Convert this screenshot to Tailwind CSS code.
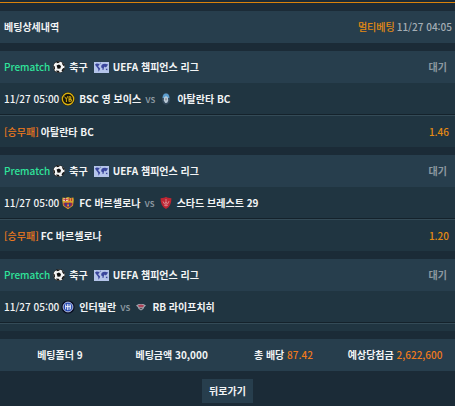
<!DOCTYPE html>
<html lang="ko">
<head>
  <meta charset="UTF-8" />
  <meta name="viewport" content="width=device-width, initial-scale=1.0"/>
  <title>베팅상세내역</title>
  <script src="https://cdn.jsdelivr.net/npm/@tailwindcss/browser@4"></script>
</head>
<body class="bg-[#1b2b37] min-h-screen font-['Noto_Sans_CJK_KR',sans-serif] text-[10px] leading-4 font-medium text-[#f2f4f5]">
  <!-- shared icons -->
  <svg class="hidden" aria-hidden="true">
    <symbol id="ball" viewBox="0 0 12 12">
      <circle cx="6" cy="6" r="6" fill="#111"/>
      <circle cx="6" cy="6" r="5.6" fill="#f4f4f4"/>
      <path fill="#111" d="M3.6 4.6 6 3.4 8 5 7.4 7.6 4.6 7.8ZM3.4.8 7 .2 6.2 1.8 3.8 2.2ZM8.8 1.2 11.6 4 10.8 5.2 9.4 3.4ZM.2 4.4 1.8 5.4 2 8.2.8 8.8ZM10 7.2 11.8 6.8 10 10.6 8.4 9.6ZM3 9.4 5.8 9.8 6.8 11.8 4 11.6Z"/>
    </symbol>
    <symbol id="world" viewBox="0 0 15 11">
      <path fill="#b4c4ea" d="M0 0H15V11H0Z"/>
      <path fill="#39459c" d="M1 2.4 2.6 1.6 4.6 1.8 5.8 2.8 4.6 3.6 4.2 4.6 5.6 6 6.2 6.8 5.4 8.2 4.6 9.8 4.2 7 3 5.2 1.6 3.6ZM5.4 1 7 .8 6.4 1.8ZM7.6 3 9 2 11 1.8 14.2 2.4 13.4 3.4 12.6 4.8 11.6 5.4 10.8 4.6 10 5.6 9.4 8 8.6 8 8.4 6 7.2 5.6 7.2 4.4ZM11.8 6.8 13.4 6.8 13.4 8.2 12 8Z"/>
    </symbol>
    <symbol id="youngboys" viewBox="0 0 14 14">
      <circle cx="7" cy="7" r="6.8" fill="#17150b"/>
      <circle cx="7" cy="7" r="5.7" fill="none" stroke="#d9b010" stroke-width="1.4"/>
      <path fill="none" stroke="#d9b010" stroke-width="1" d="M3.6 4.6 5.4 7.2 6.8 4.2M5.4 7.2V10M8 4.4V9.6M8 4.8H9.8V6.8H8.4M8 7.4H10.4V9.2H8"/>
    </symbol>
    <symbol id="atalanta" viewBox="0 0 14 14">
      <ellipse cx="7" cy="6.8" rx="4.2" ry="6" fill="#33495c"/>
      <path fill="#5c9fd0" d="M3.6 6C3.8 2.8 5 1.4 7 1.4S10.2 2.8 10.4 6Z"/>
      <path fill="#b9c9d6" d="M5 5.4 7 4 9 5.4 9.2 8.4 8.2 10.8 6.2 11 4.8 8.6Z"/>
      <path fill="#6d6970" d="M6.2 6.4H7.8L7 9Z"/>
    </symbol>
    <symbol id="barca" viewBox="0 0 14 14">
      <path fill="#d6a52b" d="M1.6 1.4 4.4 2 7 1 9.6 2 12.4 1.4 12.8 4 12 9.8 7 13.2 2 9.8 1.2 4Z"/>
      <path fill="#e6d6c6" d="M2.4 2.4H6.8V5H2.2Z"/>
      <path fill="#c32b42" d="M4 2.2H5V5H4ZM2.4 3.2H6.8V4H2.4ZM7.8 2.2H8.8V5H7.8ZM10 2.2H11V5H10Z"/>
      <path fill="#9c234e" d="M2.6 6.8H11.4V9.2L7 12 2.6 9.2Z"/>
      <path fill="#284494" d="M4.2 6.8H5.6V11L4.2 10ZM8 6.8H9.4V10.4L8 11.4Z"/>
      <path fill="#d6a52b" d="M6.2 8.6H8V10.2H6.2Z"/>
    </symbol>
    <symbol id="brest" viewBox="0 0 14 14">
      <path fill="#bd2532" d="M1.6 2.2C4 2.2 5.6 1.8 7 .8 8.4 1.8 10 2.2 12.4 2.2 12.6 7.4 10.8 11 7 13 3.2 11 1.4 7.4 1.6 2.2Z"/>
      <path fill="none" stroke="#e0949b" stroke-width=".8" d="M7 3V10.4M4 5.4 5 7.6 7 6.4 9 7.6 10 5M5 9.2H9"/>
    </symbol>
    <symbol id="inter" viewBox="0 0 14 14">
      <circle cx="7" cy="7" r="6.6" fill="#080d23"/>
      <circle cx="7" cy="7" r="4.9" fill="#1b3fae" stroke="#dfe6f7" stroke-width=".8"/>
      <path fill="none" stroke="#f2f5fc" stroke-width=".9" d="M4.6 4.4V9.4M6.4 3.8V10.2M8 3.8V10.2M9.6 4.4V9.4M4.6 6.6H9.6"/>
    </symbol>
    <symbol id="leipzig" viewBox="0 0 14 14">
      <path fill="#9ea4ad" d="M2 5.4 4.6 4H9.4L12 5.4 10.4 7 9.4 9 7 10.4 4.6 9 3.6 7Z"/>
      <path fill="#b04458" d="M4 5.2 7 4.4 10 5.2 9 7.2H5Z"/>
      <path fill="#48454f" d="M5.4 8H8.6L7 9.6Z"/>
    </symbol>
  </svg>

  <main class="border-t border-[#d9820b] mt-[2px] pt-2">
    <header class="flex items-center justify-between h-8 bg-[#273e4d] pl-1 pr-[3px]">
      <h1 class="font-bold">베팅상세내역</h1>
      <p class="flex gap-[2px] text-[#a4adb4]"><span class="text-[#e58a12]">멀티베팅</span><time>11/27 04:05</time></p>
    </header>

    <section class="mt-2 bg-[#203541]">
      <div class="flex items-center h-8 bg-[#273e4d] pl-1 pr-2">
        <span class="text-[#2fe39b] mr-[3px]">Prematch</span>
        <svg class="size-3 mr-1"><use href="#ball"/></svg>
        <span class="mr-[6px] font-bold">축구</span>
        <svg class="w-[15px] h-[11px] mr-1"><use href="#world"/></svg>
        <h2 class="font-bold">UEFA 챔피언스 리그</h2>
        <span class="ml-auto text-[#8d99a1] font-bold">대기</span>
      </div>
      <div class="flex items-center h-8 px-1 border-b border-[#14222b]">
        <time class="mr-[2px]">11/27 05:00</time>
        <svg class="size-[14px] mr-1"><use href="#youngboys"/></svg>
        <span class="font-bold">BSC 영 보이스</span>
        <span class="mx-1 text-[#8d99a1]">vs</span>
        <svg class="size-[14px] mr-1"><use href="#atalanta"/></svg>
        <span class="font-bold">아탈란타 BC</span>
      </div>
      <div class="flex items-center h-8 pl-1 pr-[6px] border-t border-[#344b57]">
        <span class="mr-[2px] text-[#f07a1c]">[승무패]</span>
        <span class="font-bold">아탈란타 BC</span>
        <span class="ml-auto text-[#e58a12]">1.46</span>
      </div>
    </section>

    <section class="mt-2 bg-[#203541]">
      <div class="flex items-center h-8 bg-[#273e4d] pl-1 pr-2">
        <span class="text-[#2fe39b] mr-[3px]">Prematch</span>
        <svg class="size-3 mr-1"><use href="#ball"/></svg>
        <span class="mr-[6px] font-bold">축구</span>
        <svg class="w-[15px] h-[11px] mr-1"><use href="#world"/></svg>
        <h2 class="font-bold">UEFA 챔피언스 리그</h2>
        <span class="ml-auto text-[#8d99a1] font-bold">대기</span>
      </div>
      <div class="flex items-center h-8 px-1 border-b border-[#14222b]">
        <time class="mr-[2px]">11/27 05:00</time>
        <svg class="size-[14px] mr-1"><use href="#barca"/></svg>
        <span class="font-bold">FC 바르셀로나</span>
        <span class="mx-1 text-[#8d99a1]">vs</span>
        <svg class="size-[14px] mr-1"><use href="#brest"/></svg>
        <span class="font-bold">스타드 브레스트 29</span>
      </div>
      <div class="flex items-center h-8 pl-1 pr-[6px] border-t border-[#344b57]">
        <span class="mr-[2px] text-[#f07a1c]">[승무패]</span>
        <span class="font-bold">FC 바르셀로나</span>
        <span class="ml-auto text-[#e58a12]">1.20</span>
      </div>
    </section>

    <section class="mt-2 bg-[#203541]">
      <div class="flex items-center h-8 bg-[#273e4d] pl-1 pr-2">
        <span class="text-[#2fe39b] mr-[3px]">Prematch</span>
        <svg class="size-3 mr-1"><use href="#ball"/></svg>
        <span class="mr-[6px] font-bold">축구</span>
        <svg class="w-[15px] h-[11px] mr-1"><use href="#world"/></svg>
        <h2 class="font-bold">UEFA 챔피언스 리그</h2>
        <span class="ml-auto text-[#8d99a1] font-bold">대기</span>
      </div>
      <div class="flex items-center h-8 px-1 border-b border-[#14222b]">
        <time class="mr-[2px]">11/27 05:00</time>
        <svg class="size-[14px] mr-1"><use href="#inter"/></svg>
        <span class="font-bold">인터밀란</span>
        <span class="mx-1 text-[#8d99a1]">vs</span>
        <svg class="size-[14px] mr-1"><use href="#leipzig"/></svg>
        <span class="font-bold">RB 라이프치히</span>
      </div>
      <div class="h-2 border-t border-[#344b57]"></div>
    </section>

    <footer class="grid grid-cols-4 items-center h-8 mt-2 px-1 bg-[#273e4d] text-center whitespace-nowrap font-bold">
      <p>베팅폴더 9</p>
      <p>베팅금액 30,000</p>
      <p>총 배당 <span class="text-[#f07a1c] font-medium">87.42</span></p>
      <p>예상당첨금 <span class="text-[#f07a1c] font-medium">2,622,600</span></p>
    </footer>

    <div class="flex justify-center mt-2">
      <button type="button" onclick="history.back()" class="h-6 px-[7px] bg-[#273e4d] font-bold">뒤로가기</button>
    </div>
  </main>
</body>
</html>
